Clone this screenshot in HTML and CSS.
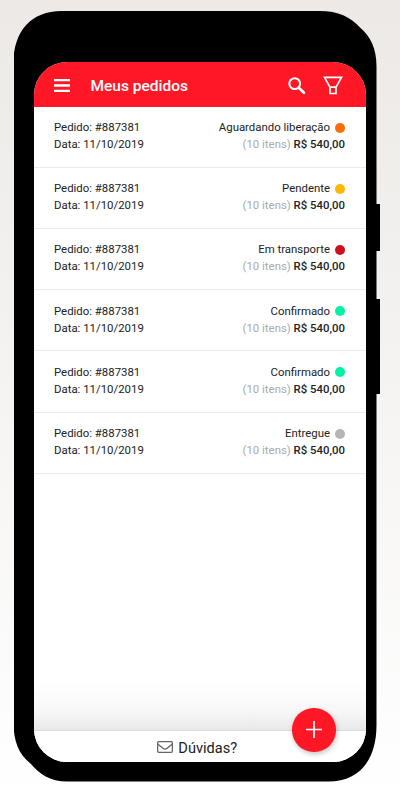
FILE: index.html
```html
<!DOCTYPE html>
<html lang="pt-BR">
<head>
<meta charset="utf-8">
<title>Meus pedidos</title>
<link rel="stylesheet" href="styles.css">
</head>
<body>
<div class="phone">
  <span class="side-button power"></span>
  <span class="side-button volume"></span>
  <div class="screen">
    <header class="bar">
      <svg class="menu" width="16" height="13" viewBox="0 0 16 13"><path d="M0 1.2h16M0 6.5h16M0 11.8h16" stroke="#fff" stroke-width="2.3"/></svg>
      <h1>Meus pedidos</h1>
      <svg class="search" width="18" height="18" viewBox="0 0 18 18" fill="none" stroke="#fff"><circle cx="6.7" cy="6.6" r="5.4" stroke-width="2"/><path d="M10.8 10.7l5.2 5.1" stroke-width="2.6" stroke-linecap="round"/></svg>
      <svg class="filter" width="20" height="19" viewBox="0 0 20 19" fill="none" stroke="#fff" stroke-width="1.7"><path d="M1.5 1.3h17L13 11.2v6.3H7v-6.3zM7 11.2h6"/></svg>
    </header>
    <main class="orders">
      <article class="order"><div><p>Pedido: #887381</p><p>Data: 11/10/2019</p></div><div class="info"><p class="status">Aguardando liberação<i class="dot orange"></i></p><p><span class="items">(10 itens)</span> <b>R$ 540,00</b></p></div></article>
      <article class="order"><div><p>Pedido: #887381</p><p>Data: 11/10/2019</p></div><div class="info"><p class="status">Pendente<i class="dot yellow"></i></p><p><span class="items">(10 itens)</span> <b>R$ 540,00</b></p></div></article>
      <article class="order"><div><p>Pedido: #887381</p><p>Data: 11/10/2019</p></div><div class="info"><p class="status">Em transporte<i class="dot red"></i></p><p><span class="items">(10 itens)</span> <b>R$ 540,00</b></p></div></article>
      <article class="order"><div><p>Pedido: #887381</p><p>Data: 11/10/2019</p></div><div class="info"><p class="status">Confirmado<i class="dot green"></i></p><p><span class="items">(10 itens)</span> <b>R$ 540,00</b></p></div></article>
      <article class="order"><div><p>Pedido: #887381</p><p>Data: 11/10/2019</p></div><div class="info"><p class="status">Confirmado<i class="dot green"></i></p><p><span class="items">(10 itens)</span> <b>R$ 540,00</b></p></div></article>
      <article class="order"><div><p>Pedido: #887381</p><p>Data: 11/10/2019</p></div><div class="info"><p class="status">Entregue<i class="dot gray"></i></p><p><span class="items">(10 itens)</span> <b>R$ 540,00</b></p></div></article>
    </main>
    <footer class="help">
      <svg width="16" height="12" viewBox="0 0 16 12" fill="none" stroke="#666" stroke-width="1.3"><rect x=".65" y=".65" width="14.7" height="10.7" rx="1"/><path d="M1 3.2l5.2 4.2q1.8 1.3 3.6 0L15 3.2"/></svg>
      <span>Dúvidas?</span>
    </footer>
    <button class="add" aria-label="Novo pedido"><svg width="16" height="17" viewBox="0 0 16 17"><path d="M8 0v17M0 8.5h16" stroke="#fff" stroke-width="1.7"/></svg></button>
  </div>
</div>
</body>
</html>
```
FILE: styles.css
```css
* { box-sizing: border-box; }
body {
  margin: 0;
  height: 800px;
  overflow: hidden;
  padding: 11px 0 0 13.5px;
  background: linear-gradient(#ece9e6, #fff);
  font-family: Roboto, sans-serif;
  color: #222;
}
.phone {
  position: relative;
  width: 363px;
  height: 770.5px;
  padding: 51px 0 0 20.5px;
}
.phone::before {
  content: "";
  position: absolute;
  inset: 0;
  background: #000;
  clip-path: path("M48 0H306C325 0 337 6 346.500 16.500C357 25 363 38 363 55V714C363 750 345 770.500 315 770.500H54C36 770.500 26 763 17 752.500C5 743 0 730 0 711V52C0 20 18 0 48 0Z");
}
.side-button {
  position: absolute;
  left: 360px;
  width: 6.5px;
  background: #000;
}
.power { top: 193px; height: 47px; }
.volume { top: 288px; height: 95px; }
.screen {
  position: relative;
  display: flex;
  flex-direction: column;
  width: 331.5px;
  height: 700px;
  overflow: hidden;
  border-radius: 33px;
  background: #fff;
}
.bar {
  display: flex;
  align-items: center;
  height: 45px;
  flex: none;
  padding: 2px 22.5px 0 20px;
  background: #ff1726;
}
h1 {
  margin: 0 auto 0 20.5px;
  font-size: 15.5px;
  font-weight: 500;
  line-height: 20px;
  color: #fff;
}
.filter { margin-left: 17px; }
.orders {
  flex: 1;
  background: linear-gradient(#fff calc(100% - 48px), #f8f8f8 calc(100% - 20px), #e9e9e9);
}
.order {
  display: flex;
  justify-content: space-between;
  height: 61.25px;
  padding: 12.5px 20.5px 0 20px;
  border-bottom: 1px solid #ebebeb;
  font-size: 11.4px;
  line-height: 17px;
}
.order:first-child { height: 60.5px; padding-top: 12px; }
.order p { margin: 0; }
.info { text-align: right; }
.status { display: flex; align-items: center; justify-content: flex-end; }
.dot { width: 10px; height: 10px; margin-left: 5px; border-radius: 50%; }
.orange { background: #ff6b00; }
.yellow { background: #ffb800; }
.red { background: #cf1018; }
.green { background: #00f3a5; }
.gray { background: #b5b5b5; }
.items { color: #aaa; }
b { font-weight: 500; }
.help {
  display: flex;
  justify-content: center;
  align-items: center;
  gap: 5px;
  height: 32px;
  padding: 2px 5px 0 0;
  border-top: 1px solid #ddd;
  background: #fff;
  font-size: 14.6px;
}
.help svg { margin-bottom: 1px; }
.add {
  position: absolute;
  right: 30px;
  bottom: 10.5px;
  display: flex;
  align-items: center;
  justify-content: center;
  width: 43.5px;
  height: 43.5px;
  padding: 0;
  border: 0;
  border-radius: 50%;
  background: #ff1726;
  box-shadow: 1px 2px 5px rgba(0, 0, 0, .25);
}
```
